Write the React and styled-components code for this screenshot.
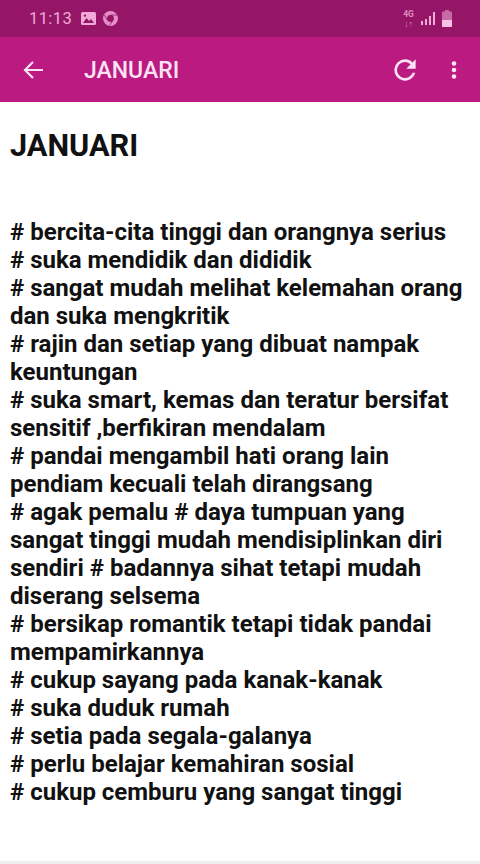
import React from 'react';
import styled, { createGlobalStyle } from 'styled-components';

const Global = createGlobalStyle`
  html, body { margin: 0; padding: 0; background: #fff; }
  body { width: 480px; height: 864px; overflow: hidden; font-family: Roboto, "Liberation Sans", sans-serif; }
  * { box-sizing: border-box; }
`;
const Page = styled.div`width:480px;height:864px;display:flex;flex-direction:column;background:#fff;`;
const StatusBar = styled.div`height:37px;background:#951666;display:flex;align-items:center;justify-content:space-between;padding:0 28px 0 29px;color:#f0a9d8;`;
const StatusGroup = styled.div`display:flex;align-items:center;gap:${p => p.$gap || 6}px;`;
const Time = styled.span`font-size:16.5px;letter-spacing:.4px;margin-right:3px;`;
const Tiny = styled.span`display:block;font-size:8.5px;font-weight:700;line-height:10px;width:11px;text-align:center;opacity:.8;`;
const AppBar = styled.header`height:65px;background:#bb1a80;display:flex;align-items:center;padding:0 14px 0 21px;color:#fbe3f3;`;
const Title = styled.h1`font-size:23px;font-weight:500;margin:2px 0 0 39px;flex:1;line-height:28px;`;
const IconButton = styled.span`display:flex;align-items:center;justify-content:center;width:${p => p.$w || 24}px;height:30px;margin-left:${p => p.$ml || 0}px;`;
const Content = styled.main`flex:1;padding:27px 10px 0;color:#111;`;
const Heading = styled.h2`font-size:30.7px;line-height:34px;font-weight:700;margin:0 0 55px;`;
const Body = styled.p`font-size:24px;line-height:28px;font-weight:700;margin:0;white-space:pre-line;`;
const FootLine = styled.div`height:3px;background:#eee;`;

const lines = `# bercita-cita tinggi dan orangnya serius
# suka mendidik dan dididik
# sangat mudah melihat kelemahan orang
dan suka mengkritik
# rajin dan setiap yang dibuat nampak
keuntungan
# suka smart, kemas dan teratur bersifat
sensitif ,berfikiran mendalam
# pandai mengambil hati orang lain
pendiam kecuali telah dirangsang
# agak pemalu # daya tumpuan yang
sangat tinggi mudah mendisiplinkan diri
sendiri # badannya sihat tetapi mudah
diserang selsema
# bersikap romantik tetapi tidak pandai
mempamirkannya
# cukup sayang pada kanak-kanak
# suka duduk rumah
# setia pada segala-galanya
# perlu belajar kemahiran sosial
# cukup cemburu yang sangat tinggi`;

export default function App() {
  return (
    <Page>
      <Global />
      <StatusBar>
        <StatusGroup>
          <Time>11:13</Time>
          <svg width="15" height="13" viewBox="0 0 15 13"><rect width="15" height="13" rx="1.5" fill="#f0a9d8"/><path d="M2 11l3.5-5 2.5 3 2-2 3 4z" fill="#951666"/><circle cx="4" cy="3.6" r="1.2" fill="#951666"/></svg>
          <svg width="15" height="15" viewBox="0 0 15 15" style={{marginLeft: 1}}><circle cx="7.5" cy="7.5" r="7.5" fill="#e58fc8"/><circle cx="7.5" cy="7.5" r="3.4" fill="#951666"/><path d="M7.5 4H14M4.5 9.5L1.5 4M9.5 10L6.5 14.5" stroke="#951666" strokeWidth=".8"/></svg>
        </StatusGroup>
        <StatusGroup $gap={7}>
          <Tiny>4G<br/>↓↑</Tiny>
          <svg width="14" height="15" viewBox="0 0 14 15"><path d="M0 10h2v4H0zM4 8h2v6H4zM8 5h2v9H8zM12 1h2v13h-2z" fill="#f0a9d8"/></svg>
          <svg width="10" height="17" viewBox="0 0 10 17"><path d="M3 0h4v1.5h2a1 1 0 0 1 1 1V16a1 1 0 0 1-1 1H1a1 1 0 0 1-1-1V2.5a1 1 0 0 1 1-1h2z" fill="#c76aa6"/><rect y="10" width="10" height="7" rx="1" fill="#f6c3e6"/></svg>
        </StatusGroup>
      </StatusBar>
      <AppBar>
        <IconButton>
          <svg width="20" height="20" viewBox="0 0 20 20" fill="none" stroke="#fbe3f3" strokeWidth="2.2"><path d="M20 10H2M10 2l-8 8 8 8"/></svg>
        </IconButton>
        <Title>JANUARI</Title>
        <IconButton $w={32}>
          <svg width="32" height="32" viewBox="0 0 24 24" fill="#fbe3f3"><path d="M17.65 6.35A7.96 7.96 0 0 0 12 4a8 8 0 1 0 7.73 10h-2.08A6 6 0 1 1 12 6c1.66 0 3.14.69 4.22 1.78L13 11h7V4z"/></svg>
        </IconButton>
        <IconButton $ml={21}>
          <svg width="28" height="28" viewBox="0 0 24 24" fill="#fbe3f3"><circle cx="12" cy="5.5" r="2.3"/><circle cx="12" cy="12" r="2.3"/><circle cx="12" cy="18.5" r="2.3"/></svg>
        </IconButton>
      </AppBar>
      <Content>
        <Heading>JANUARI</Heading>
        <Body>{lines}</Body>
      </Content>
      <FootLine />
    </Page>
  );
}
